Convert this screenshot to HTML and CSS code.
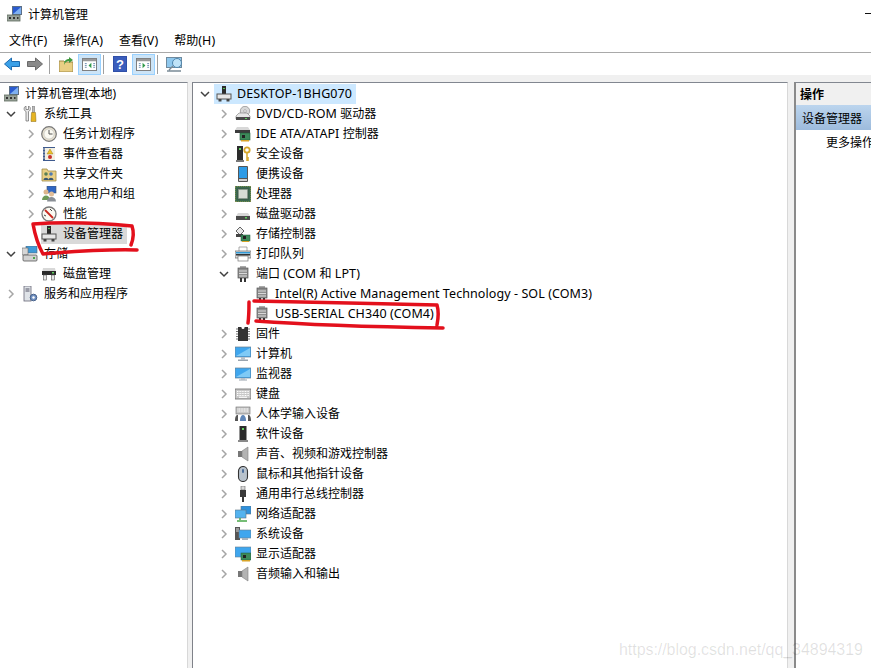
FILE: index.html
```html
<!DOCTYPE html>
<html lang="zh-CN">
<head>
<meta charset="utf-8">
<title>计算机管理</title>
<link rel="stylesheet" href="styles.css">
</head>
<body>
<svg class="defs" width="0" height="0" aria-hidden="true">
  <defs>
    <symbol id="r" viewBox="0 0 10 10"><path d="M3 1l4 4-4 4" fill="none" stroke="#a6a6a6" stroke-width="1.5"/></symbol>
    <symbol id="d" viewBox="0 0 10 10"><path d="M1 3l4 4 4-4" fill="none" stroke="#404040" stroke-width="1.5"/></symbol>
    <symbol id="mgmt" viewBox="0 0 16 16"><rect x="5" y="0" width="10" height="9" fill="#5c6f86"/><rect x="6" y="1" width="8" height="7" fill="#2a5bd0"/><path d="M6 8l8-7v7z" fill="#7fb0f0"/><rect x="0" y="9" width="13" height="6" fill="#9aa39a" stroke="#5e6a5e" stroke-width=".8"/><rect x="2" y="11" width="2" height="2" fill="#333"/><rect x="6" y="11" width="2" height="2" fill="#333"/><rect x="10" y="11" width="1.5" height="2" fill="#333"/></symbol>
    <symbol id="tools" viewBox="0 0 16 16"><path d="M4 0c-2.500 1-2.500 4.500 0 5.500V15h2.500V5.500c2.500-1 2.500-4.500 0-5.500v3.500H4z" fill="#e8e8e8" stroke="#666" stroke-width=".7"/><rect x="10.500" y="0" width="2" height="6.500" fill="#bbb" stroke="#666" stroke-width=".5"/><path d="M9.500 6.500h4l.5 9h-5z" fill="#e6b422" stroke="#8a6a10" stroke-width=".5"/></symbol>
    <symbol id="clock" viewBox="0 0 16 16"><circle cx="8" cy="8" r="7.300" fill="#e6e0cf" stroke="#777" stroke-width="1.200"/><circle cx="8" cy="8" r="5" fill="#fbfaf2" stroke="#bbb" stroke-width=".5"/><path d="M8 4v4h3.500" fill="none" stroke="#555" stroke-width="1"/></symbol>
    <symbol id="log" viewBox="0 0 16 16"><rect x="2" y="1" width="12" height="14" fill="#3e5a8e"/><rect x="4" y="2" width="10" height="12" fill="#f2efe2"/><path d="M9 3l3 5H6z" fill="#ecc22a" stroke="#8a6a10" stroke-width=".4"/><circle cx="9" cy="11" r="2" fill="#c8322a"/><path d="M2 3h2M2 6h2M2 9h2M2 12h2" stroke="#ddd" stroke-width=".8"/></symbol>
    <symbol id="share" viewBox="0 0 16 16"><path d="M1 3h5l1 2h8v10H1z" fill="#e9cf84" stroke="#a08a48" stroke-width=".8"/><circle cx="5" cy="8" r="1.800" fill="#5a7f54"/><circle cx="10" cy="8" r="1.800" fill="#4f7bb0"/><path d="M2.500 14c0-3 5-3 5 0zM7.500 14c0-3 5-3 5 0z" fill="#39566f"/></symbol>
    <symbol id="users" viewBox="0 0 16 16"><rect x="6" y="0" width="9" height="7" fill="#2f66c4" stroke="#456" stroke-width=".6"/><circle cx="5" cy="6" r="2.500" fill="#dcb58c"/><path d="M1 14c0-6 8-6 8 0z" fill="#6f9a58"/><circle cx="10.500" cy="8" r="2.500" fill="#e0bd98"/><path d="M6 15.500c0-6 9-6 9 0z" fill="#8a8f96"/></symbol>
    <symbol id="perf" viewBox="0 0 16 16"><circle cx="8" cy="8" r="7" fill="#fafaf2" stroke="#777" stroke-width="1.300"/><path d="M4 4l8 8" stroke="#c8281e" stroke-width="1.800"/><path d="M9 3l2 2M3 9l2 1" stroke="#444" stroke-width="1"/></symbol>
    <symbol id="dev" viewBox="0 0 16 16"><rect x="6" y="0" width="4" height="8" fill="#2b2b2b"/><rect x="7" y="2" width="2" height="1" fill="#4fc04f"/><rect x="1" y="8" width="14" height="5" fill="#e6e6e6" stroke="#555" stroke-width="1"/><rect x="2.500" y="13" width="3" height="2.500" fill="#444"/><rect x="10.500" y="13" width="3" height="2.500" fill="#444"/></symbol>
    <symbol id="store" viewBox="0 0 16 16"><rect x="4" y="0" width="11" height="7" fill="#3f9ad8" stroke="#567" stroke-width=".6"/><rect x="0" y="2" width="6" height="7" fill="#d6d6d6" stroke="#666" stroke-width=".6"/><rect x="1" y="9" width="14" height="6" rx="1" fill="#d2d2d2" stroke="#555" stroke-width=".8"/><rect x="11" y="11" width="2" height="2" fill="#4ca64c"/></symbol>
    <symbol id="disk" viewBox="0 0 16 16"><path d="M2 2h12l1 5H1z" fill="#d8d8d8"/><rect x="1" y="5" width="14" height="4" fill="#2a2a2a"/><rect x="11" y="6" width="2" height="1.500" fill="#5fd05f"/><rect x="2.500" y="9" width="3" height="5" fill="#e8e8e8" stroke="#555" stroke-width=".6"/><rect x="10.500" y="9" width="3" height="5" fill="#e8e8e8" stroke="#555" stroke-width=".6"/></symbol>
    <symbol id="svc" viewBox="0 0 16 16"><rect x="2" y="0" width="7" height="15" fill="#dfe3e8" stroke="#667" stroke-width=".8"/><path d="M3.500 3h4M3.500 5h4" stroke="#556"/><circle cx="11.500" cy="11.500" r="3.300" fill="#6f8fc0" stroke="#47618a"/><circle cx="11.500" cy="11.500" r="1.200" fill="#fff"/></symbol>
    <symbol id="dvd" viewBox="0 0 16 16"><circle cx="10" cy="5" r="4.700" fill="#d8d8d8" stroke="#888" stroke-width=".7"/><circle cx="10" cy="5" r="1.300" fill="#fff" stroke="#888" stroke-width=".6"/><path d="M4 7h8l3 3v3H1v-3z" fill="#e6e6e6" stroke="#777" stroke-width=".6"/><rect x="1" y="11" width="14" height="3" fill="#4a4a4a"/><rect x="10" y="12" width="2" height="1" fill="#5fd05f"/></symbol>
    <symbol id="ide" viewBox="0 0 16 16"><path d="M2 1h11l2 3H0z" fill="#d8d8d8"/><rect x="0" y="4" width="15" height="3" fill="#3c3c3c"/><rect x="5" y="7" width="10" height="7" fill="#3d8a5a" stroke="#1f5a38" stroke-width=".6"/><rect x="7" y="9" width="3" height="3" fill="#222"/><rect x="6" y="14" width="8" height="1.500" fill="#d8a428"/></symbol>
    <symbol id="sec" viewBox="0 0 16 16"><rect x="2" y="0" width="6" height="15" fill="#2c2c2c"/><rect x="4" y="2" width="2" height="2" fill="#5fd05f"/><rect x="1" y="14" width="8" height="2" fill="#777"/><circle cx="12" cy="4" r="2.700" fill="none" stroke="#d6a62a" stroke-width="1.800"/><path d="M12 7v8m0-3h2m-2 2h2" stroke="#d6a62a" stroke-width="1.500"/></symbol>
    <symbol id="pda" viewBox="0 0 16 16"><rect x="3" y="0" width="10" height="16" rx="1" fill="#555"/><rect x="4" y="1" width="8" height="11" fill="#2d9be6"/><rect x="4" y="13" width="8" height="2" fill="#cfcfcf"/></symbol>
    <symbol id="cpu" viewBox="0 0 16 16"><rect x="0" y="0" width="16" height="16" fill="#3e7455" stroke="#b79a42" stroke-width="1" stroke-dasharray="1 1"/><rect x="1.500" y="1.500" width="13" height="13" fill="#3a5f4a"/><rect x="3.500" y="3.500" width="9" height="9" fill="#d6dcd4" stroke="#8a968c" stroke-width=".5"/></symbol>
    <symbol id="hdd" viewBox="0 0 16 16"><path d="M3 7h10l2 3H1z" fill="#d8d8d8"/><rect x="1" y="10" width="14" height="4" fill="#4a4a4a"/><rect x="10" y="11" width="2" height="1.500" fill="#5fd05f"/></symbol>
    <symbol id="stc" viewBox="0 0 16 16"><path d="M1 5l4-4 4 4-4 4z" fill="#e8e8e8" stroke="#555" stroke-width=".9"/><rect x="1" y="8" width="7" height="3" fill="#444"/><rect x="6" y="9" width="9" height="6" fill="#3d8a5a" stroke="#1f5a38" stroke-width=".5"/><rect x="8" y="10" width="3" height="3" fill="#222"/><rect x="7" y="15" width="7" height="1" fill="#d8a428"/></symbol>
    <symbol id="print" viewBox="0 0 16 16"><path d="M4 1h8v5H4z" fill="#fff" stroke="#888" stroke-width=".7"/><rect x="0" y="5" width="16" height="7" fill="#dcdcdc" stroke="#666" stroke-width=".7"/><rect x="1" y="6" width="14" height="1.500" fill="#2f9ad8"/><rect x="3" y="10" width="10" height="5" fill="#fff" stroke="#777" stroke-width=".7"/><rect x="1" y="8" width="14" height="1.500" fill="#333"/></symbol>
    <symbol id="port" viewBox="0 0 16 16"><rect x="5" y="0" width="6" height="2" fill="#aaa"/><rect x="3" y="2" width="10" height="10" fill="#8f8f8f" stroke="#555" stroke-width=".7"/><path d="M4 5h8M4 7.500h8M4 10h8" stroke="#d8d8d8" stroke-width="1"/><rect x="5" y="12" width="2" height="4" fill="#333"/><rect x="9" y="12" width="2" height="4" fill="#333"/></symbol>
    <symbol id="chip" viewBox="0 0 16 16"><rect x="3" y="1" width="10" height="14" fill="#333"/><circle cx="8" cy="1.500" r="1.500" fill="#fff"/><path d="M1 3h2M1 5.500h2M1 8h2M1 10.500h2M1 13h2M13 3h2M13 5.500h2M13 8h2M13 10.500h2M13 13h2" stroke="#777"/></symbol>
    <symbol id="pc" viewBox="0 0 16 16"><rect x="0" y="1" width="16" height="10" fill="#3fa6ee" stroke="#6a7f8f" stroke-width=".7"/><path d="M1 10L15 2v8z" fill="#7fcaf6"/><rect x="6" y="11" width="4" height="2.500" fill="#b8c0c8"/><rect x="3" y="13.500" width="10" height="1.500" fill="#9aa4ae"/></symbol>
    <symbol id="mon" viewBox="0 0 16 16"><rect x="0" y="2" width="16" height="10" fill="#3fa6ee" stroke="#6a7f8f" stroke-width=".7"/><path d="M1 11L15 3v8z" fill="#7fcaf6"/><rect x="6" y="12" width="4" height="1.500" fill="#b8c0c8"/><rect x="4" y="13.500" width="8" height="1" fill="#9aa4ae"/></symbol>
    <symbol id="kbd" viewBox="0 0 16 16"><rect x="0" y="3" width="16" height="10" fill="#c8c8c8" stroke="#6a6a6a" stroke-width=".8"/><path d="M2 5.500h12M2 7.500h12M2 9.500h12" stroke="#fff" stroke-width="1" stroke-dasharray="1 .6"/><rect x="4" y="10.800" width="8" height="1" fill="#fff"/></symbol>
    <symbol id="hid" viewBox="0 0 16 16"><rect x="1" y="1" width="14" height="7" fill="#c8c8c8" stroke="#6a6a6a" stroke-width=".6"/><path d="M2.500 3h11M2.500 5h11" stroke="#fff" stroke-dasharray="1 .6"/><path d="M0 15c0-6 2-6 3-6v6zM13 9c1 0 3 0 3 6h-3z" fill="#555"/><path d="M5 15c0-5 2-6 3-6s3 1 3 6z" fill="#5f86b8"/></symbol>
    <symbol id="soft" viewBox="0 0 16 16"><rect x="4.500" y="0" width="7" height="14" fill="#2c2c2c"/><rect x="7" y="2" width="2" height="2" fill="#5fd05f"/><rect x="3" y="14" width="10" height="2" fill="#8a8a8a"/></symbol>
    <symbol id="snd" viewBox="0 0 16 16"><rect x="3" y="5" width="4" height="6" fill="#777"/><path d="M7 5l6-4v14l-6-4z" fill="#b4b4b4" stroke="#808080" stroke-width=".6"/></symbol>
    <symbol id="mouse" viewBox="0 0 16 16"><rect x="3.500" y="0.500" width="9" height="15" rx="4.500" fill="#b8c2cc" stroke="#333" stroke-width="1.100"/><rect x="7" y="3" width="2" height="4" rx="1" fill="#4d6f9c"/></symbol>
    <symbol id="usb" viewBox="0 0 16 16"><rect x="6" y="0" width="4" height="4" fill="#d8d8d8" stroke="#666" stroke-width=".6"/><path d="M5 4h6v7H9v5H7v-5H5z" fill="#3a3a3a"/></symbol>
    <symbol id="net" viewBox="0 0 16 16"><rect x="6" y="0" width="10" height="8" fill="#2f92dd" stroke="#5f7383" stroke-width=".6"/><rect x="0" y="4" width="11" height="8" fill="#54b3ef" stroke="#5f7383" stroke-width=".6"/><path d="M5 12v2M2 15h10" stroke="#4aa84a" stroke-width="1.500"/></symbol>
    <symbol id="sys" viewBox="0 0 16 16"><rect x="0" y="1" width="5" height="13" fill="#555"/><path d="M1 3h3M1 5h3" stroke="#ddd"/><rect x="4" y="4" width="12" height="8" fill="#3fa6ee" stroke="#6a7f8f" stroke-width=".6"/><rect x="7" y="12" width="6" height="2" fill="#a8b2bc"/></symbol>
    <symbol id="disp" viewBox="0 0 16 16"><rect x="0" y="1" width="16" height="10" fill="#3fa6ee" stroke="#6a7f8f" stroke-width=".6"/><rect x="6" y="7" width="10" height="7" fill="#3d8a5a" stroke="#1f5a38" stroke-width=".5"/><rect x="8" y="9" width="3" height="3" fill="#222"/><rect x="7" y="14" width="8" height="1.500" fill="#d8a428"/></symbol>
  </defs>
</svg>

<div class="title">
  <svg class="ico title-ico"><use href="#mgmt"/></svg>
  <span class="title-text">计算机管理</span>
  <span class="minimize"></span>
</div>

<nav class="menu">
  <span>文件<span class="lat">(F)</span></span><span>操作<span class="lat">(A)</span></span><span>查看<span class="lat">(V)</span></span><span>帮助<span class="lat">(H)</span></span>
</nav>

<div class="toolbar">
  <svg class="tb-a" viewBox="0 0 16 14"><path d="M7.500 1L.5 7l7 6V9.500h8v-5h-8z" fill="#3aa0e8" stroke="#1c6bb0"/></svg>
  <svg class="tb-b" viewBox="0 0 16 14"><path d="M8.500 1l7 6-7 6V9.500h-8v-5h8z" fill="#8a8a8a" stroke="#6a6a6a"/></svg>
  <i class="sep sep-1"></i>
  <svg class="tb-c" viewBox="0 0 14 15"><path d="M0 4h5l1 1h8v10H0z" fill="#e9cf84" stroke="#a08a48"/><path d="M5 8c0-4 2-6 5-6V0l4 3-4 3V4C8 4 6 5 5 8z" fill="#3f9a3f"/></svg>
  <span class="tb-btn tb-btn-1"><svg viewBox="0 0 16 14"><rect x=".5" y=".5" width="15" height="13" fill="#fff" stroke="#777"/><rect x="1" y="1" width="14" height="2.500" fill="#999"/><path d="M3 6h2M3 8h2M3 10h2M12 6h2M12 8h2M12 10h2" stroke="#6a8ab0"/><path d="M10 5v6L7 8z" fill="#2f9a4a"/></svg></span>
  <i class="sep sep-2"></i>
  <svg class="tb-d" viewBox="0 0 14 16"><rect width="14" height="16" fill="#2f4fa8"/><rect x="1" y="1" width="12" height="14" fill="#3a5dbc"/><text x="7" y="13" text-anchor="middle" class="help-q">?</text></svg>
  <span class="tb-btn tb-btn-2"><svg viewBox="0 0 16 14"><rect x=".5" y=".5" width="15" height="13" fill="#fff" stroke="#777"/><rect x="1" y="1" width="14" height="2.500" fill="#999"/><path d="M3 6h2M3 8h2M3 10h2M12 6h2M12 8h2M12 10h2" stroke="#6a8ab0"/><path d="M7 5v6l3-3z" fill="#2f9a4a"/></svg></span>
  <i class="sep sep-3"></i>
  <svg class="tb-e" viewBox="0 0 17 15"><rect x=".5" y=".5" width="15" height="10" fill="#8fc8ee" stroke="#6f8a9e"/><circle cx="11" cy="6" r="4.500" fill="#bfe3f8" stroke="#4f86ad"/><path d="M7 9l-4 4M1 14h14" stroke="#7a8a96" stroke-width="1.400"/></svg>
</div>

<main class="panes">
  <section class="pane left">
    <div class="row"><span class="chev"></span><svg class="ico"><use href="#mgmt"/></svg><span class="lbl">计算机管理(本地)</span></div>
    <div class="row l1"><svg class="chev"><use href="#d"/></svg><svg class="ico"><use href="#tools"/></svg><span class="lbl">系统工具</span></div>
    <div class="row l2"><svg class="chev"><use href="#r"/></svg><svg class="ico"><use href="#clock"/></svg><span class="lbl">任务计划程序</span></div>
    <div class="row l2"><svg class="chev"><use href="#r"/></svg><svg class="ico"><use href="#log"/></svg><span class="lbl">事件查看器</span></div>
    <div class="row l2"><svg class="chev"><use href="#r"/></svg><svg class="ico"><use href="#share"/></svg><span class="lbl">共享文件夹</span></div>
    <div class="row l2"><svg class="chev"><use href="#r"/></svg><svg class="ico"><use href="#users"/></svg><span class="lbl">本地用户和组</span></div>
    <div class="row l2"><svg class="chev"><use href="#r"/></svg><svg class="ico"><use href="#perf"/></svg><span class="lbl">性能</span></div>
    <div class="row l2"><span class="chev"></span><span class="sel sel-gray"><svg class="ico"><use href="#dev"/></svg><span class="lbl">设备管理器</span></span></div>
    <div class="row l1"><svg class="chev"><use href="#d"/></svg><svg class="ico"><use href="#store"/></svg><span class="lbl">存储</span></div>
    <div class="row l2"><span class="chev"></span><svg class="ico"><use href="#disk"/></svg><span class="lbl">磁盘管理</span></div>
    <div class="row l1"><svg class="chev"><use href="#r"/></svg><svg class="ico"><use href="#svc"/></svg><span class="lbl">服务和应用程序</span></div>
  </section>

  <section class="pane mid">
    <div class="row m0"><svg class="chev"><use href="#d"/></svg><span class="sel sel-blue"><svg class="ico"><use href="#dev"/></svg><span class="lbl lat">DESKTOP-1BHG070</span></span></div>
    <div class="row m1"><svg class="chev"><use href="#r"/></svg><svg class="ico"><use href="#dvd"/></svg><span class="lbl"><span class="lat">DVD/CD-ROM </span>驱动器</span></div>
    <div class="row m1"><svg class="chev"><use href="#r"/></svg><svg class="ico"><use href="#ide"/></svg><span class="lbl"><span class="lat">IDE ATA/ATAPI </span>控制器</span></div>
    <div class="row m1"><svg class="chev"><use href="#r"/></svg><svg class="ico"><use href="#sec"/></svg><span class="lbl">安全设备</span></div>
    <div class="row m1"><svg class="chev"><use href="#r"/></svg><svg class="ico"><use href="#pda"/></svg><span class="lbl">便携设备</span></div>
    <div class="row m1"><svg class="chev"><use href="#r"/></svg><svg class="ico"><use href="#cpu"/></svg><span class="lbl">处理器</span></div>
    <div class="row m1"><svg class="chev"><use href="#r"/></svg><svg class="ico"><use href="#hdd"/></svg><span class="lbl">磁盘驱动器</span></div>
    <div class="row m1"><svg class="chev"><use href="#r"/></svg><svg class="ico"><use href="#stc"/></svg><span class="lbl">存储控制器</span></div>
    <div class="row m1"><svg class="chev"><use href="#r"/></svg><svg class="ico"><use href="#print"/></svg><span class="lbl">打印队列</span></div>
    <div class="row m1"><svg class="chev"><use href="#d"/></svg><svg class="ico"><use href="#port"/></svg><span class="lbl">端口<span class="lat"> (COM </span>和<span class="lat"> LPT)</span></span></div>
    <div class="row m2"><svg class="ico"><use href="#port"/></svg><span class="lbl lat">Intel(R) Active Management Technology - SOL (COM3)</span></div>
    <div class="row m2"><svg class="ico"><use href="#port"/></svg><span class="lbl lat">USB-SERIAL CH340 (COM4)</span></div>
    <div class="row m1"><svg class="chev"><use href="#r"/></svg><svg class="ico"><use href="#chip"/></svg><span class="lbl">固件</span></div>
    <div class="row m1"><svg class="chev"><use href="#r"/></svg><svg class="ico"><use href="#pc"/></svg><span class="lbl">计算机</span></div>
    <div class="row m1"><svg class="chev"><use href="#r"/></svg><svg class="ico"><use href="#mon"/></svg><span class="lbl">监视器</span></div>
    <div class="row m1"><svg class="chev"><use href="#r"/></svg><svg class="ico"><use href="#kbd"/></svg><span class="lbl">键盘</span></div>
    <div class="row m1"><svg class="chev"><use href="#r"/></svg><svg class="ico"><use href="#hid"/></svg><span class="lbl">人体学输入设备</span></div>
    <div class="row m1"><svg class="chev"><use href="#r"/></svg><svg class="ico"><use href="#soft"/></svg><span class="lbl">软件设备</span></div>
    <div class="row m1"><svg class="chev"><use href="#r"/></svg><svg class="ico"><use href="#snd"/></svg><span class="lbl">声音、视频和游戏控制器</span></div>
    <div class="row m1"><svg class="chev"><use href="#r"/></svg><svg class="ico"><use href="#mouse"/></svg><span class="lbl">鼠标和其他指针设备</span></div>
    <div class="row m1"><svg class="chev"><use href="#r"/></svg><svg class="ico"><use href="#usb"/></svg><span class="lbl">通用串行总线控制器</span></div>
    <div class="row m1"><svg class="chev"><use href="#r"/></svg><svg class="ico"><use href="#net"/></svg><span class="lbl">网络适配器</span></div>
    <div class="row m1"><svg class="chev"><use href="#r"/></svg><svg class="ico"><use href="#sys"/></svg><span class="lbl">系统设备</span></div>
    <div class="row m1"><svg class="chev"><use href="#r"/></svg><svg class="ico"><use href="#disp"/></svg><span class="lbl">显示适配器</span></div>
    <div class="row m1"><svg class="chev"><use href="#r"/></svg><svg class="ico"><use href="#snd"/></svg><span class="lbl">音频输入和输出</span></div>
  </section>

  <aside class="pane right">
    <div class="act-head">操作</div>
    <div class="act-sel">设备管理器</div>
    <div class="act-item">更多操作</div>
  </aside>
</main>

<svg class="scribble" viewBox="0 0 871 668" width="871" height="668" aria-hidden="true">
  <path d="M33 224C60 222 100 223 132 226C134 232 133 240 131 245M137 250C100 249 70 252 43 254C38 245 35 235 33 224" />
  <path d="M254 301C310 302 380 304 437 305C439 312 438 320 437 325M249 302C249 310 249 316 248 323M256 321C310 325 380 327 443 328" />
</svg>

<div class="watermark">https://blog.csdn.net/qq_34894319</div>
</body>
</html>
```

FILE: styles.css
```css
* { box-sizing: border-box; }
html, body {
  margin: 0;
  height: 100%;
  overflow: hidden;
}
body {
  width: 871px;
  height: 668px;
  position: relative;
  display: flex;
  flex-direction: column;
  background: #f0f0f0;
  color: #000;
  font: 12px/20px "Noto Sans", "Noto Sans CJK SC", sans-serif;
}
.defs { position: absolute; }
.lat { font-size: 12.5px; letter-spacing: .08px; }
.title {
  height: 28px;
  flex: none;
  background: #fff;
  display: flex;
  align-items: center;
  padding-left: 7px;
  position: relative;
}
.title-ico { margin-right: 5px; }
.title-text { padding-top: 2px; }
.minimize {
  position: absolute;
  right: 0;
  top: 13px;
  width: 6px;
  height: 1px;
  background: #111;
}
.menu {
  height: 25px;
  flex: none;
  background: #fff;
  border-bottom: 1px solid #a9a9a9;
  display: flex;
  align-items: center;
  gap: 16px;
  padding-left: 9px;
  padding-top: 1px;
}
.toolbar {
  height: 22px;
  flex: none;
  background: #fff;
  display: flex;
  align-items: center;
  padding-left: 4px;
}
.toolbar svg { flex: none; }
.tb-a { width: 16px; height: 14px; margin-right: 7px; }
.tb-b { width: 16px; height: 14px; }
.sep { width: 1px; height: 19px; background: #a0a0a0; flex: none; }
.sep-1 { margin: 0 9px 0 6px; }
.tb-c { width: 14px; height: 15px; margin-right: 5px; }
.tb-btn {
  width: 23px;
  height: 21px;
  flex: none;
  background: #cce4f7;
  border: 1px solid #99d1ff;
  display: flex;
  align-items: center;
  justify-content: center;
}
.tb-btn svg { width: 15px; height: 13px; }
.sep-2 { margin: 0 9px 0 2px; }
.tb-d { width: 14px; height: 16px; margin-right: 5px; }
.help-q { font: bold 13px "Liberation Sans", sans-serif; fill: #fff; }
.sep-3 { margin: 0 8px 0 2px; }
.tb-e { width: 17px; height: 15px; }
.panes {
  flex: 1;
  min-height: 0;
  display: flex;
  padding-top: 7px;
}
.pane {
  background: #fff;
  border-top: 1px solid #828790;
  overflow: hidden;
}
.left { width: 188px; flex: none; padding-top: 1px; border-right: 1px solid #d8d8d8; }
.mid { width: 596px; flex: none; padding-top: 1px; margin-left: 4px; border-left: 1px solid #7f8289; border-right: 1px solid #d8d8d8; }
.right { flex: 1; margin-left: 6px; border-left: 2px solid #8a8a8a; }
.row {
  height: 20px;
  display: flex;
  align-items: center;
  white-space: nowrap;
}
.chev { width: 10px; height: 10px; flex: none; }
.ico { width: 16px; height: 16px; flex: none; }
.lbl { margin-left: 5px; }
.left .row { padding-left: 0; }
.left .row > .chev:first-child { margin-right: 4px; width: 0; }
.left .l1 { padding-left: 6px; }
.left .l1 > .chev:first-child { width: 10px; margin-right: 6px; }
.left .l1 .lbl { margin-left: 6px; }
.left .l2 { padding-left: 26px; }
.left .l2 > .chev:first-child { width: 10px; margin-right: 5px; }
.left .l2 .lbl { margin-left: 6px; }
.sel { display: flex; align-items: center; height: 20px; }
.sel-gray { background: #d9d9d9; padding-right: 4px; }
.sel-blue { background: #cce8ff; padding-left: 2px; padding-right: 4px; margin-left: 4px; }
.mid .m0 { padding-left: 7px; }
.mid .m1 { padding-left: 26px; }
.mid .m1 .chev { margin-right: 6px; }
.mid .m2 { padding-left: 61px; }
.act-head {
  height: 22px;
  background: #f0f0f0;
  font-weight: 700;
  padding: 2px 0 0 4px;
  line-height: 20px;
}
.act-sel {
  height: 25px;
  line-height: 25px;
  padding: 1px 0 0 6px;
  background: linear-gradient(#bcd5ee, #9dbbdc);
}
.act-item {
  margin-top: 2px;
  padding-left: 30px;
  line-height: 22px;
  white-space: nowrap;
}
.scribble {
  position: absolute;
  left: 0;
  top: 0;
  pointer-events: none;
}
.scribble path {
  fill: none;
  stroke: #e3101c;
  stroke-width: 3.5;
  stroke-linecap: round;
  stroke-linejoin: round;
}
.watermark {
  position: absolute;
  left: 619px;
  top: 641px;
  font: 16px/18px "Liberation Sans", sans-serif;
  letter-spacing: -.05px;
  color: rgba(0, 0, 0, .12);
  white-space: nowrap;
}
```
